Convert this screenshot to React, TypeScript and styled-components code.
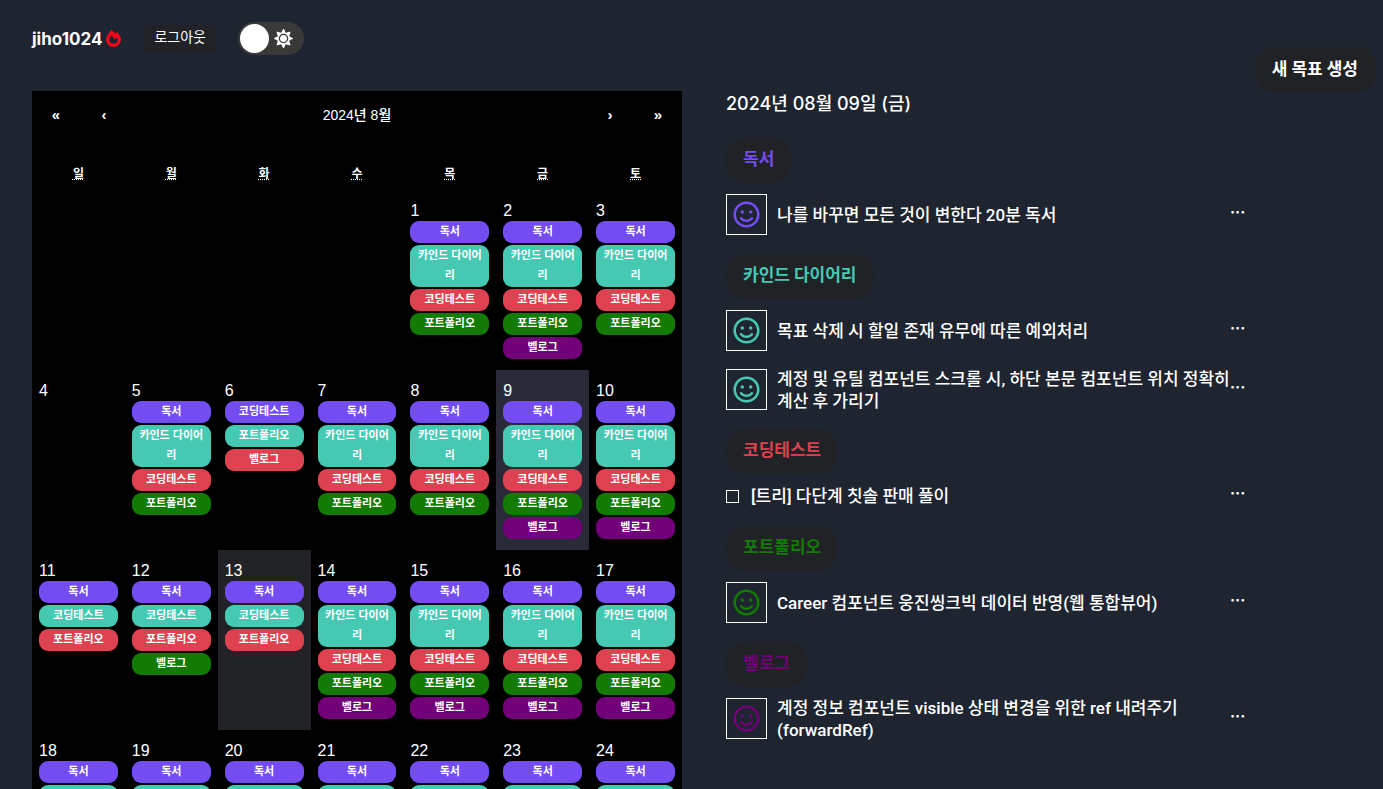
import React from "react";
import styled, { createGlobalStyle } from "styled-components";
import { FaFireAlt, FaSun, FaRegSmile } from "react-icons/fa";

const palette = {
  page: "#1e2530",
  surface: "#212225",
  active: "#282b37",
  violet: "#734df2",
  teal: "#45c9b3",
  red: "#de4150",
  green: "#137a03",
  purple: "#720078",
};

const GlobalStyle = createGlobalStyle`
  * { box-sizing: border-box; }
  body {
    margin: 0;
    background: ${palette.page};
    color: #fff;
    font-family: Inter, "Noto Sans CJK KR", sans-serif;
  }
  button {
    margin: 0;
    padding: 0;
    border: 0;
    background: none;
    color: inherit;
    font: inherit;
    cursor: pointer;
  }
  h1, h2, h3, ul, p { margin: 0; padding: 0; }
  ul { list-style: none; }
`;

const Page = styled.div`
  display: flex;
  flex-direction: column;
  height: 100vh;
  overflow: hidden;
`;

const Header = styled.header`
  display: flex;
  align-items: flex-start;
  flex: none;
  height: 91px;
  padding: 22px 7px 0 32px;
`;

const Account = styled.div`
  display: flex;
  align-items: center;
  height: 33px;
`;

const UserName = styled.h1`
  display: flex;
  align-items: center;
  gap: 3px;
  font-size: 17px;
  font-weight: 700;
  line-height: 20px;

  svg { color: #f8061d; font-size: 17px; }
`;

const LogoutButton = styled.button`
  height: 28px;
  margin: 0 22px;
  padding: 0 10px 4px;
  border-radius: 5px;
  background: ${palette.surface};
  font-size: 14px;
  line-height: 20px;
`;

const ThemeSwitch = styled.label`
  display: flex;
  align-items: center;
  gap: 5px;
  width: 66px;
  height: 33px;
  padding: 0 2px;
  border-radius: 17px;
  background: #393939;
  cursor: pointer;

  svg { font-size: 19px; }
`;

const SwitchInput = styled.input`
  appearance: none;
  width: 29px;
  height: 29px;
  margin: 0;
  border-radius: 50%;
  background: #fff;
`;

const NewGoalButton = styled.button`
  height: 45px;
  margin: 25px 0 0 auto;
  padding: 0 18px 2px 17px;
  border-radius: 20px;
  background: ${palette.surface};
  font-size: 17px;
  font-weight: 700;
  line-height: 22px;
`;

const Main = styled.main`
  display: grid;
  grid-template-columns: minmax(0, 650fr) minmax(0, 657fr);
  gap: 44px;
  flex: 1;
  min-height: 0;
  padding: 0 0 0 32px;
`;

const Calendar = styled.section`
  background: #000;
  overflow-y: auto;
  scrollbar-width: none;
  font-family: "Liberation Sans", "Noto Sans CJK KR", sans-serif;
`;

const CalendarNav = styled.nav`
  display: grid;
  grid-template-columns: 48px 48px 1fr 48px 48px;
  align-items: center;
  height: 48px;
  margin-bottom: 16px;
  text-align: center;
`;

const ArrowButton = styled.button`
  font-size: 15px;
  font-weight: 700;
  line-height: 20px;
`;

const MonthLabel = styled.button`
  font-size: 14px;
  font-weight: 500;
  line-height: 20px;
`;

const MonthTable = styled.table`
  width: 100%;
  table-layout: fixed;
  border-collapse: collapse;
`;

const Weekday = styled.th`
  height: 35px;
  padding: 2px 0 0;
  font-size: 12px;
  font-weight: 700;
  line-height: 16px;

  abbr { text-decoration: underline dotted; }
`;

const DayCell = styled.td<{ $tone?: string }>`
  height: 180px;
  padding: 11px 7px 0;
  vertical-align: top;
  background: ${(p) => p.$tone ?? "transparent"};
`;

const DayNumber = styled.button`
  display: block;
  height: 20px;
  font-size: 16px;
  line-height: 18px;
`;

const ChipList = styled.ul`
  display: flex;
  flex-direction: column;
  gap: 2px;
`;

const Chip = styled.li<{ $color: string }>`
  padding: 0 4px 2px;
  border-radius: 9px;
  background: ${(p) => p.$color};
  font-size: 11px;
  font-weight: 700;
  line-height: 20px;
  text-align: center;
  word-break: break-all;
`;

const Agenda = styled.section`
  padding-top: 1px;
  overflow-y: auto;
  scrollbar-width: none;
`;

const AgendaDate = styled.h2`
  margin-bottom: 22px;
  font-size: 18px;
  font-weight: 500;
  line-height: 24px;
`;

const Goal = styled.section`
  margin-bottom: 19px;
`;

const GoalTitle = styled.h3<{ $color: string }>`
  width: fit-content;
  height: 45px;
  padding: 10px 17px 0;
  border-radius: 20px;
  background: ${palette.surface};
  color: ${(p) => p.$color};
  font-size: 17px;
  font-weight: 700;
  line-height: 22px;
`;

const TaskList = styled.ul`
  display: flex;
  flex-direction: column;
  gap: 18px;
  margin-top: 11px;
`;

const Task = styled.li`
  display: flex;
  align-items: center;
  width: 518px;
  max-width: 100%;
  min-height: 21px;
`;

const DoneButton = styled.button<{ $color: string }>`
  display: grid;
  place-items: center;
  flex: none;
  width: 41px;
  height: 41px;
  margin-right: 10px;
  border: 1px solid #fff;
  color: ${(p) => p.$color};
  font-size: 27px;
`;

const TodoCheck = styled.input`
  appearance: none;
  flex: none;
  width: 13px;
  height: 13px;
  margin: 0 12px 0 0;
  border: 1px solid #fff;
`;

const TaskText = styled.p`
  flex: 1;
  margin: -2px 0;
  font-family: Roboto, "Noto Sans CJK KR", sans-serif;
  font-size: 17px;
  font-weight: 500;
  line-height: 22px;
  word-break: keep-all;
`;

const MoreButton = styled.button`
  flex: none;
  width: 14px;
  height: 22px;
  padding-bottom: 6px;
  font-size: 16px;
  font-weight: 600;
  line-height: 16px;
`;

type GoalName = "독서" | "카인드 다이어리" | "코딩테스트" | "포트폴리오" | "벨로그";

const order = [palette.violet, palette.teal, palette.red, palette.green, palette.purple];

const four: GoalName[] = ["독서", "카인드 다이어리", "코딩테스트", "포트폴리오"];
const all: GoalName[] = [...four, "벨로그"];
const three: GoalName[] = ["독서", "코딩테스트", "포트폴리오"];

type Day = { day: number; goals: GoalName[]; tone?: string } | null;

const weeks: Day[][] = [
  [null, null, null, null, { day: 1, goals: four }, { day: 2, goals: all }, { day: 3, goals: four }],
  [
    { day: 4, goals: [] },
    { day: 5, goals: four },
    { day: 6, goals: ["코딩테스트", "포트폴리오", "벨로그"] },
    { day: 7, goals: four },
    { day: 8, goals: four },
    { day: 9, goals: all, tone: palette.active },
    { day: 10, goals: all },
  ],
  [
    { day: 11, goals: three },
    { day: 12, goals: [...three, "벨로그"] },
    { day: 13, goals: three, tone: palette.surface },
    { day: 14, goals: all },
    { day: 15, goals: all },
    { day: 16, goals: all },
    { day: 17, goals: all },
  ],
  [18, 19, 20, 21, 22, 23, 24].map((day) => ({ day, goals: ["독서", "코딩테스트"] as GoalName[] })),
];

const weekdays = ["일", "월", "화", "수", "목", "금", "토"];

const agenda: { name: GoalName; color: string; tasks: { text: string; done: boolean }[] }[] = [
  { name: "독서", color: palette.violet, tasks: [{ text: "나를 바꾸면 모든 것이 변한다 20분 독서", done: true }] },
  {
    name: "카인드 다이어리",
    color: palette.teal,
    tasks: [
      { text: "목표 삭제 시 할일 존재 유무에 따른 예외처리", done: true },
      { text: "계정 및 유틸 컴포넌트 스크롤 시, 하단 본문 컴포넌트 위치 정확히 계산 후 가리기", done: true },
    ],
  },
  { name: "코딩테스트", color: palette.red, tasks: [{ text: "[트리] 다단계 칫솔 판매 풀이", done: false }] },
  { name: "포트폴리오", color: palette.green, tasks: [{ text: "Career 컴포넌트 웅진씽크빅 데이터 반영(웹 통합뷰어)", done: true }] },
  { name: "벨로그", color: palette.purple, tasks: [{ text: "계정 정보 컴포넌트 visible 상태 변경을 위한 ref 내려주기(forwardRef)", done: true }] },
];

function MonthCalendar() {
  return (
    <Calendar>
      <CalendarNav>
        <ArrowButton>«</ArrowButton>
        <ArrowButton>‹</ArrowButton>
        <MonthLabel>2024년 8월</MonthLabel>
        <ArrowButton>›</ArrowButton>
        <ArrowButton>»</ArrowButton>
      </CalendarNav>
      <MonthTable>
        <thead>
          <tr>
            {weekdays.map((name) => (
              <Weekday key={name} scope="col">
                <abbr title={`${name}요일`}>{name}</abbr>
              </Weekday>
            ))}
          </tr>
        </thead>
        <tbody>
          {weeks.map((week, w) => (
            <tr key={w}>
              {week.map((cell, d) => (
                <DayCell key={d} $tone={cell?.tone}>
                  {cell && (
                    <>
                      <DayNumber>{cell.day}</DayNumber>
                      <ChipList>
                        {cell.goals.map((goal, i) => (
                          <Chip key={goal} $color={order[i]}>{goal}</Chip>
                        ))}
                      </ChipList>
                    </>
                  )}
                </DayCell>
              ))}
            </tr>
          ))}
        </tbody>
      </MonthTable>
    </Calendar>
  );
}

export default function App() {
  return (
    <>
      <GlobalStyle />
      <Page>
        <Header>
          <Account>
            <UserName>jiho1024 <FaFireAlt /></UserName>
            <LogoutButton>로그아웃</LogoutButton>
            <ThemeSwitch>
              <SwitchInput type="checkbox" role="switch" aria-label="테마" />
              <FaSun />
            </ThemeSwitch>
          </Account>
          <NewGoalButton>새 목표 생성</NewGoalButton>
        </Header>
        <Main>
          <MonthCalendar />
          <Agenda>
            <AgendaDate>2024년 08월 09일 (금)</AgendaDate>
            {agenda.map((goal) => (
              <Goal key={goal.name}>
                <GoalTitle $color={goal.color}>{goal.name}</GoalTitle>
                <TaskList>
                  {goal.tasks.map((task) => (
                    <Task key={task.text}>
                      {task.done ? (
                        <DoneButton $color={goal.color} aria-label={task.text}><FaRegSmile /></DoneButton>
                      ) : (
                        <TodoCheck type="checkbox" aria-label={task.text} />
                      )}
                      <TaskText>{task.text}</TaskText>
                      <MoreButton>···</MoreButton>
                    </Task>
                  ))}
                </TaskList>
              </Goal>
            ))}
          </Agenda>
        </Main>
      </Page>
    </>
  );
}
